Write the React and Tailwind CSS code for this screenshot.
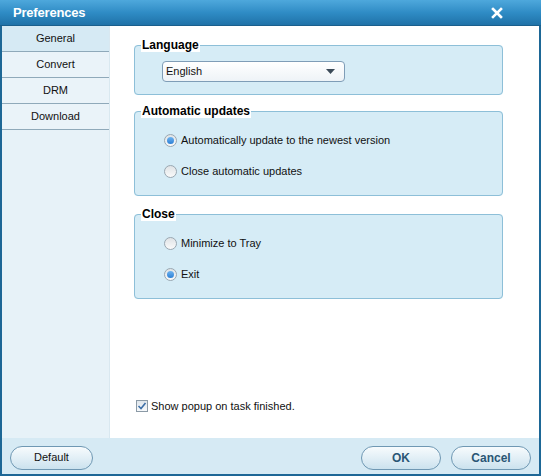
import React from "react";

function Radio({ checked, label }) {
  return (
    <div className="flex items-center h-[16px]">
      <span className="relative w-[13px] h-[13px] rounded-full border border-[#9aa7b1] bg-gradient-to-b from-[#dfe3e6] to-[#fafafa] flex items-center justify-center">
        {checked && <span className="w-[7px] h-[7px] rounded-full bg-gradient-to-b from-[#6fb4f0] to-[#2a7fd4]" />}
      </span>
      <span className="ml-[4px] text-[11px] text-[#111]">{label}</span>
    </div>
  );
}

function Group({ title, className, children }) {
  return (
    <fieldset className={"border border-[#8dbfd8] rounded-[4px] bg-[#d6ecf6] " + className}>
      <legend className="ml-[6px] px-[1px] bg-white text-[12px] font-bold text-black leading-[14px]">{title}</legend>
      {children}
    </fieldset>
  );
}

function Btn({ children, bold, className }) {
  return (
    <button className={"h-[24px] rounded-full border border-[#6f98b3] bg-gradient-to-b from-[#f7fbfd] via-[#e2eff6] to-[#cbe2ee] " + (bold ? "text-[12px] font-bold text-[#2a5675] " : "text-[11px] text-[#111] ") + className}>
      {children}
    </button>
  );
}

export default function App() {
  const items = ["General", "Convert", "DRM", "Download"];
  return (
    <div className="w-[541px] h-[476px] flex flex-col bg-[#1d6796] [font-family:'Liberation_Sans',sans-serif]">
      <div className="h-[26px] flex items-center justify-between px-[13px] bg-gradient-to-b from-[#4ea8dc] via-[#2f8cc5] to-[#1f72a8] border-b border-[#1a5f8c]">
        <span className="text-white font-bold text-[13px] tracking-[-0.2px]">Preferences</span>
        <svg width="12" height="12" viewBox="0 0 12 12" className="mr-[25px]">
          <path d="M2 2 L10 10 M10 2 L2 10" stroke="white" strokeWidth="2.6" strokeLinecap="square" />
        </svg>
      </div>
      <div className="flex-1 flex flex-col mx-[2px] mb-[2px] bg-white">
        <div className="flex flex-1">
          <div className="w-[108px] bg-[#e7f2f8] border-r border-[#d9e8f0] flex flex-col">
            {items.map((t, i) => (
              <div
                key={t}
                className={"h-[26px] flex items-center justify-center text-[11px] text-[#111] border-b border-[#8fa9ba] " + (i === 0 ? "bg-[#d6eaf4]" : "bg-[#eaf3f9]")}
              >
                {t}
              </div>
            ))}
          </div>
          <div className="flex-1 flex flex-col pl-[24px] pr-[36px] pt-[12px]">
            <Group title="Language" className="h-[57px]">
              <div className="ml-[27px] mt-[9px] w-[183px] h-[21px] rounded-[4px] border border-[#7f9db7] bg-gradient-to-b from-[#ffffff] to-[#eef3f7] flex items-center justify-between pl-[3px] pr-[9px]">
                <span className="text-[11px] text-[#111]">English</span>
                <svg width="9" height="5" viewBox="0 0 9 5"><path d="M0 0 H9 L4.5 5 Z" fill="#3b4a58" /></svg>
              </div>
            </Group>
            <Group title="Automatic updates" className="h-[92px] mt-[9px]">
              <div className="ml-[29px] mt-[14px] flex flex-col gap-[15px]">
                <Radio checked label="Automatically update to the newest version" />
                <Radio label="Close automatic updates" />
              </div>
            </Group>
            <Group title="Close" className="h-[92px] mt-[11px]">
              <div className="ml-[29px] mt-[14px] flex flex-col gap-[15px]">
                <Radio label="Minimize to Tray" />
                <Radio checked label="Exit" />
              </div>
            </Group>
            <div className="mt-auto mb-[24px] ml-[2px] flex items-center">
              <span className="w-[12px] h-[12px] border border-[#8b9aa6] bg-gradient-to-b from-[#dfe6ec] to-[#f7f9fb] flex items-center justify-center">
                <svg width="10" height="10" viewBox="0 0 10 10"><path d="M1.5 5 L4 7.5 L8.5 2" stroke="#3d6fa8" strokeWidth="1.6" fill="none" /></svg>
              </span>
              <span className="ml-[3px] text-[11px] text-[#111]">Show popup on task finished.</span>
            </div>
          </div>
        </div>
        <div className="h-[36px] bg-[#d6eaf4] flex items-center px-[8px] pt-[3px]">
          <Btn className="w-[83px]">Default</Btn>
          <div className="flex-1" />
          <Btn bold className="w-[80px] mr-[10px]">OK</Btn>
          <Btn bold className="w-[80px]">Cancel</Btn>
        </div>
      </div>
    </div>
  );
}
